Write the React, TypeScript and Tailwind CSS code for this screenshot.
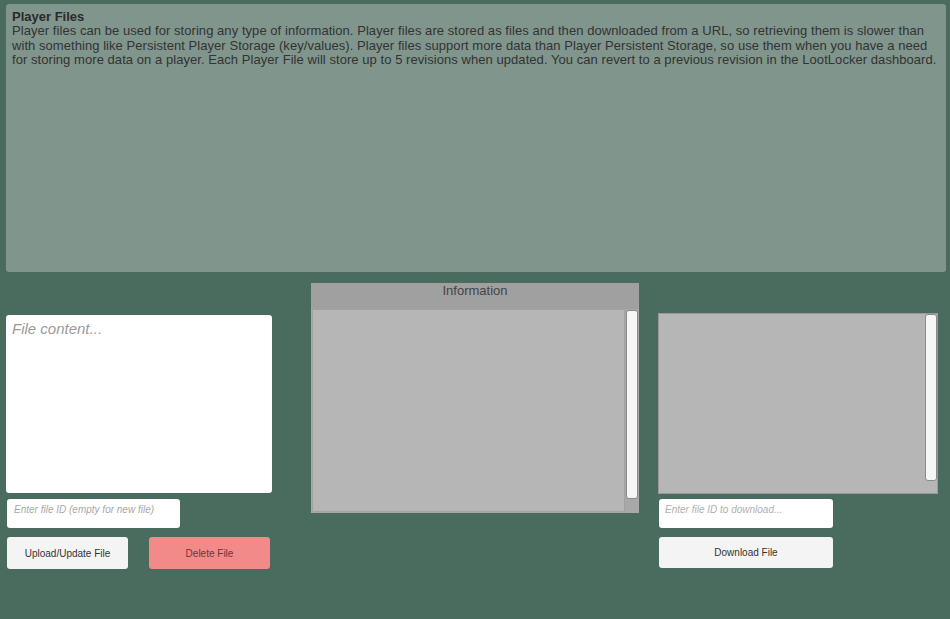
export default function App() {
  return (
    <div
      className="h-[619px] w-[950px] overflow-hidden bg-[#4a6c5f] text-[#333]"
      style={{ fontFamily: '"Liberation Sans", Arial, sans-serif' }}
    >
      <div className="ml-[6px] mt-[4px] h-[268px] w-[940px] rounded-[3px] bg-[#80958c] px-[6px] pt-[5px]">
        <div className="text-[13px] font-bold leading-[15px] text-[#2a2a2a]">Player Files</div>
        <p className="text-[13px] leading-[14.5px] tracking-[0.055px] text-[#333]">
          Player files can be used for storing any type of information. Player files are stored as files and then downloaded from a URL, so retrieving them is slower than
          <br />
          with something like Persistent Player Storage (key/values). Player files support more data than Player Persistent Storage, so use them when you have a need
          <br />
          for storing more data on a player. Each Player File will store up to 5 revisions when updated. You can revert to a previous revision in the LootLocker dashboard.
        </p>
      </div>

      <div className="flex items-start">
        {/* left column */}
        <div className="ml-[6px] mt-[43px] flex w-[266px] flex-col">
          <div className="h-[178px] w-[266px] rounded-[3px] bg-white px-[6px] pt-[3px] text-[15px] italic text-[#9a9a9a]">
            File content...
          </div>
          <div className="ml-[1px] mt-[6px] h-[29px] w-[173px] rounded-[3px] bg-white px-[7px] pt-[3px] text-[10px] italic text-[#a8a8a8]">
            Enter file ID (empty for new file)
          </div>
          <div className="ml-[1px] mt-[9px] flex gap-[21px]">
            <button className="flex h-[32px] w-[121px] items-center justify-center rounded-[3px] bg-[#f4f4f4] text-[10px] text-[#333]">
              Upload/Update File
            </button>
            <button className="flex h-[32px] w-[121px] items-center justify-center rounded-[3px] bg-[#f28a8a] text-[10px] text-[#6e3636]">
              Delete File
            </button>
          </div>
        </div>

        {/* middle column */}
        <div className="ml-[39px] mt-[11px] flex w-[328px] flex-col">
          <div className="flex h-[26px] items-start justify-center bg-[#a0a0a0] pt-[1px] text-[13px] leading-[14px] text-[#444]">
            Information
          </div>
          <div className="flex h-[204px] bg-[#a8a8a8] pb-[1px] pl-[1px] pr-[1px]">
            <div className="flex-1 border border-[#a2a2a2] bg-[#b6b6b6]" />
            <div className="ml-[1px] mt-[1px] h-[189px] w-[12px] rounded-[3px] border border-[#8a8a8a] bg-[#f6f6f6]" />
          </div>
        </div>

        {/* right column */}
        <div className="ml-[19px] mt-[41px] flex w-[280px] flex-col">
          <div className="flex h-[181px] border border-[#999] bg-[#b6b6b6]">
            <div className="flex-1" />
            <div className="h-[167px] w-[12px] rounded-[3px] border border-[#8a8a8a] bg-[#f6f6f6]" />
          </div>
          <div className="ml-[1px] mt-[5px] h-[29px] w-[174px] rounded-[3px] bg-white px-[6px] pt-[3px] text-[10px] italic text-[#b0b0b0]">
            Enter file ID to download...
          </div>
          <button className="ml-[1px] mt-[9px] flex h-[31px] w-[174px] items-center justify-center rounded-[3px] bg-[#f4f4f4] text-[10px] text-[#333]">
            Download File
          </button>
        </div>
      </div>
    </div>
  );
}
